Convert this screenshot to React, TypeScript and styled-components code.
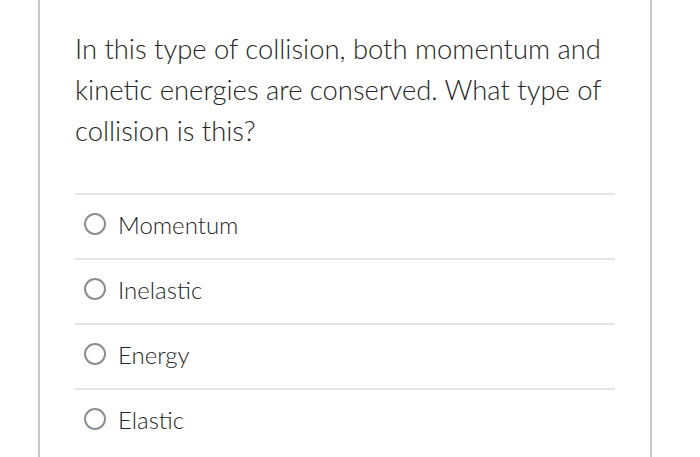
import React from "react";
import styled, { createGlobalStyle } from "styled-components";

const Global = createGlobalStyle`
  html, body { margin: 0; padding: 0; background: #fff; }
  body { font-family: Lato, "Open Sans", sans-serif; color: #2d2d2d; }
`;

const Page = styled.div`
  padding-left: 38px;
  width: 614px;
`;

const Card = styled.div`
  border-left: 2px solid #c4c8cc;
  border-right: 2px solid #c4c8cc;
  padding: 28px 35px 0 35px;
  height: 457px;
  box-sizing: border-box;
  overflow: hidden;
`;

const Question = styled.p`
  margin: 0 0 42px 0;
  font-size: 27.4px;
  font-weight: 300;
  line-height: 41px;
  color: #262626;
`;

const Answers = styled.div`
  display: flex;
  flex-direction: column;
`;

const Answer = styled.label`
  display: flex;
  align-items: center;
  gap: 12px;
  height: 65px;
  box-sizing: border-box;
  border-top: 2px solid #e3e5e7;
  padding: 0 0 5px 9px;
  font-size: 24px;
  font-weight: 300;
  color: #262626;
`;

const Radio = styled.span`
  width: 18px;
  height: 18px;
  border: 2px solid #8a8f94;
  border-radius: 50%;
  flex-shrink: 0;
`;

const options = ["Momentum", "Inelastic", "Energy", "Elastic"];

export default function App() {
  return (
    <>
      <Global />
      <Page>
        <Card>
          <Question>
            In this type of collision, both momentum and kinetic energies are
            conserved. What type of collision is this?
          </Question>
          <Answers>
            {options.map((o) => (
              <Answer key={o}>
                <Radio />
                {o}
              </Answer>
            ))}
          </Answers>
        </Card>
      </Page>
    </>
  );
}
